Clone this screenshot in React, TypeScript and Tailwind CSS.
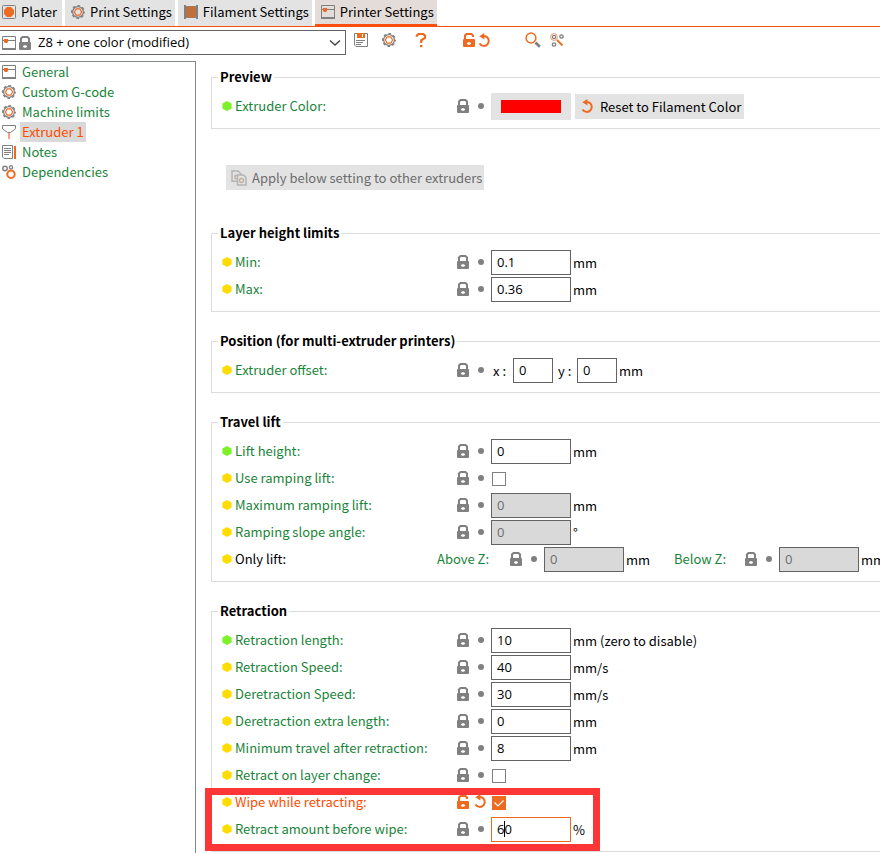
import type { ReactNode } from "react";

const ORANGE = "#ed6b21";
const GRAY = "#808080";

function PlaterIcon() {
  return (
    <svg width="14" height="14" viewBox="0 0 14 14" fill="none" aria-hidden="true">
      <rect x="0.5" y="0.5" width="13" height="13" rx="1" stroke={GRAY} />
      <path d="M5 2h4l3 3v4l-3 3H5L2 9V5z" fill={ORANGE} />
    </svg>
  );
}

function GearIcon() {
  return (
    <svg width="14" height="14" viewBox="0 0 14 14" fill="none" aria-hidden="true">
      <circle cx="7" cy="7" r="5.400" stroke={GRAY} strokeWidth="1.300" />
      <circle cx="7" cy="7" r="6.300" stroke={GRAY} strokeWidth="1.400" strokeDasharray="2.700 2.248" strokeDashoffset="1.350" />
      <path d="M5.200 3.800h3.600L10.600 7l-1.800 3.200H5.200L3.400 7z" stroke={ORANGE} strokeWidth="1.200" strokeLinejoin="round" />
    </svg>
  );
}

function SpoolIcon() {
  return (
    <svg width="14" height="14" viewBox="0 0 14 14" fill="none" aria-hidden="true">
      <rect x="2" y="1" width="10" height="12" fill="#c0703f" />
      <path d="M1 0v14M13 0v14" stroke={GRAY} strokeWidth="2" />
      <path d="M2 1.500h10M2 12.500h10" stroke="#a97c62" />
    </svg>
  );
}

function PrinterIcon() {
  return (
    <svg width="14" height="14" viewBox="0 0 14 14" fill="none" aria-hidden="true">
      <path d="M.5.5h13v13H.5z" stroke={GRAY} />
      <path d="M0 13h14" stroke={GRAY} strokeWidth="2" />
      <path d="M1 4.500h12" stroke={GRAY} />
      <path d="M2 3h4v3L5 7H3L2 6z" fill={ORANGE} />
    </svg>
  );
}

function LockIcon() {
  return (
    <svg width="12" height="14" viewBox="0 0 12 14" fill="none" aria-hidden="true">
      <path d="M2 7V2.500L3.500 1h5L10 2.500V7" stroke={GRAY} strokeWidth="2" />
      <rect y="6" width="12" height="8" rx="1" fill={GRAY} />
      <path d="M4 10.500h4M6 9v3" stroke="#fff" strokeWidth="1.300" />
    </svg>
  );
}

function UnlockIcon() {
  return (
    <svg width="12" height="14" viewBox="0 0 12 14" fill="none" aria-hidden="true">
      <path d="M2 7V2.500L3.500 1h5L10 2.500V4" stroke={ORANGE} strokeWidth="2" />
      <rect y="6" width="12" height="8" rx="1" fill={ORANGE} />
      <path d="M4 10.500h4M6 9v3" stroke="#fff" strokeWidth="1.300" />
    </svg>
  );
}

function UndoIcon() {
  return (
    <svg width="14" height="15" viewBox="0 0 14 15" fill="none" aria-hidden="true">
      <path d="M4.500 3.200h3A5 5 0 1 1 1.500 10.500" stroke={ORANGE} strokeWidth="2" />
      <path d="M6.400 0v6.400L1.300 3.200z" fill={ORANGE} />
    </svg>
  );
}

function SaveIcon() {
  return (
    <svg width="14" height="14" viewBox="0 0 14 14" fill="none" aria-hidden="true">
      <path d="M.5.5h13v13H2L.5 12z" stroke={GRAY} />
      <path d="M3 0h8v5H3z" fill={ORANGE} />
      <path d="M8.500 1v3" stroke="#fff" />
      <path d="M2 7.500h9M2 9.500h7M2 11.500h5" stroke={GRAY} />
    </svg>
  );
}

function HelpIcon() {
  return (
    <svg width="12" height="16" viewBox="0 0 12 16" fill="none" aria-hidden="true">
      <path d="M1.800 4.800V3.600L3.500 2h4.800l1.700 1.600v2.200L6.200 8.400V11" stroke={ORANGE} strokeWidth="2.200" />
      <path d="M5 13h2.400v2.200H5z" fill={ORANGE} />
    </svg>
  );
}

function SearchIcon() {
  return (
    <svg width="16" height="16" viewBox="0 0 16 16" fill="none" aria-hidden="true">
      <circle cx="6" cy="6" r="4.900" stroke={ORANGE} strokeWidth="1.500" />
      <path d="m10.500 10.500 4.300 4.300" stroke={GRAY} strokeWidth="2.800" />
    </svg>
  );
}

function CompareIcon() {
  return (
    <svg width="14" height="14" viewBox="0 0 14 14" fill="none" aria-hidden="true">
      <circle cx="4" cy="4" r="3.400" stroke="#e99a6e" />
      <circle cx="4" cy="4" r="1.600" stroke={GRAY} strokeWidth="1.200" />
      <circle cx="11.500" cy="3.500" r="1.700" stroke={GRAY} strokeWidth="1.300" />
      <circle cx="4" cy="11.500" r="1.700" stroke={GRAY} strokeWidth="1.300" />
      <path d="m7 7 5.500 5.500" stroke={ORANGE} strokeWidth="1.800" />
    </svg>
  );
}

function FunnelIcon() {
  return (
    <svg width="14" height="14" viewBox="0 0 14 14" fill="none" aria-hidden="true">
      <path d="M.5.5h13v3.300L8.500 7.500h-3L.5 3.800z" stroke={GRAY} />
      <path d="M7 8v6" stroke="#f3a67a" strokeWidth="2" />
    </svg>
  );
}

function NotesIcon() {
  return (
    <svg width="14" height="14" viewBox="0 0 14 14" fill="none" aria-hidden="true">
      <path d="M.5.5h10v13H2L.5 12z" stroke={GRAY} />
      <path d="M2 3.500h7M2 5.500h7M2 7.500h7M2 9.500h5" stroke={GRAY} />
      <path d="M13 1v13" stroke={ORANGE} strokeWidth="2" />
    </svg>
  );
}

function DependenciesIcon() {
  return (
    <svg width="14" height="14" viewBox="0 0 14 14" fill="none" aria-hidden="true">
      <circle cx="3" cy="3.500" r="2.200" stroke={GRAY} strokeWidth="1.500" />
      <circle cx="9" cy="2.300" r="1.600" stroke={GRAY} strokeWidth="1.300" />
      <circle cx="9" cy="9.300" r="3.700" stroke={ORANGE} strokeWidth="2" />
    </svg>
  );
}

function CopyIcon() {
  return (
    <svg width="16" height="16" viewBox="0 0 16 16" fill="none" aria-hidden="true">
      <path d="M6 11.200H1V1h6l3 3v1" stroke="#b4b4b4" strokeWidth="1.500" />
      <path d="M6.500 5h6L15 7.500V15H6.500z" stroke="#b4b4b4" strokeWidth="1.500" />
      <circle cx="10.500" cy="10.500" r="2" stroke="#c3aea3" strokeWidth="1.400" />
      <path d="M6 5.500H4v3h2" stroke="#c3aea3" strokeWidth="1.300" />
    </svg>
  );
}

function Hexagon({ level }: { level: "simple" | "advanced" }) {
  return (
    <svg className="shrink-0" width="10" height="10" viewBox="0 0 10 10" aria-hidden="true">
      <path d="M5 0l4.600 2.400v5.200L5 10 .4 7.600V2.400z" fill={level === "simple" ? "#7df028" : "#ffdc00"} />
    </svg>
  );
}

const tabs = [
  { label: "Plater", icon: <PlaterIcon /> },
  { label: "Print Settings", icon: <GearIcon /> },
  { label: "Filament Settings", icon: <SpoolIcon /> },
  { label: "Printer Settings", icon: <PrinterIcon />, active: true },
];

const pages = [
  { label: "General", icon: <PrinterIcon /> },
  { label: "Custom G-code", icon: <GearIcon /> },
  { label: "Machine limits", icon: <GearIcon /> },
  { label: "Extruder 1", icon: <FunnelIcon />, active: true },
  { label: "Notes", icon: <NotesIcon /> },
  { label: "Dependencies", icon: <DependenciesIcon /> },
];

function Marks({ modified = false }: { modified?: boolean }) {
  return (
    <div className="mr-[3px] flex shrink-0 items-center gap-1 pb-[2px]">
      <button type="button" aria-label="Reset to system value" className="flex w-[14px] justify-center">
        {modified ? <UnlockIcon /> : <LockIcon />}
      </button>
      <button type="button" aria-label="Reset to saved value" className="flex w-[14px] justify-center">
        {modified ? <UndoIcon /> : <span className="size-[6px] rounded-full bg-[#808080]" />}
      </button>
    </div>
  );
}

type RowProps = {
  label: string;
  id?: string;
  level?: "simple" | "advanced";
  modified?: boolean;
  children: ReactNode;
};

function Row({ label, id, level = "advanced", modified = false, children }: RowProps) {
  return (
    <div className="flex h-[27px] items-center">
      <div className="flex w-[234px] shrink-0 items-center gap-[3px] pb-[2px]">
        <Hexagon level={level} />
        <label htmlFor={id} className={modified ? "text-[#fc4d01]" : "text-[#1a8439]"}>
          {label}
        </label>
      </div>
      <Marks modified={modified} />
      {children}
    </div>
  );
}

type FieldProps = {
  id: string;
  value: string;
  unit?: string;
  disabled?: boolean;
  label?: string;
  small?: boolean;
  focused?: boolean;
};

function Field({ id, value, unit, disabled, label, small, focused }: FieldProps) {
  return (
    <>
      <div className="relative shrink-0">
        <input
          id={id}
          aria-label={label}
          defaultValue={value}
          disabled={disabled}
          className={`block h-[25px] border bg-white px-[5px] pb-px font-['Open_Sans',sans-serif] text-[13px] disabled:bg-[#d9d9d9] disabled:text-[#6d6d6d] ${
            small ? "w-10" : "w-20"
          } ${focused ? "border-[#ed6b21]" : "border-[#646464]"}`}
        />
        {focused && <span className="absolute top-1 left-[13px] h-4 w-px bg-black" />}
      </div>
      {unit && <span className="ml-[2px]">{unit}</span>}
    </>
  );
}

function Tick({ id, checked = false }: { id: string; checked?: boolean }) {
  return (
    <span className="relative ml-px flex">
      <input
        id={id}
        type="checkbox"
        defaultChecked={checked}
        className="peer size-[14px] appearance-none border border-[#808080] bg-white checked:border-[#ed6b21] checked:bg-[#ed6b21]"
      />
      <svg
        className="pointer-events-none absolute inset-0 hidden peer-checked:block"
        width="14"
        height="14"
        viewBox="0 0 14 14"
        fill="none"
        aria-hidden="true"
      >
        <path d="m2.500 6.500 3.500 3.500 5.500-5.500" stroke="#fff" strokeWidth="1.200" />
      </svg>
    </span>
  );
}

function Group({ title, children }: { title: string; children: ReactNode }) {
  return (
    <fieldset className="min-w-0 border border-r-0 border-[#dcdcdc] pt-[6px] pb-2 pl-[10px]">
      <legend className="-ml-1 px-[2px] leading-5 font-bold">{title}</legend>
      {children}
    </fieldset>
  );
}

export default function App() {
  return (
    <div className="flex min-h-screen flex-col overflow-hidden bg-white font-['Noto_Sans_CJK_SC',sans-serif] text-[13px] leading-5 whitespace-nowrap text-black">
      <nav className="flex h-[27px] gap-[3px] border-b border-[#fb4f0f]">
        {tabs.map((tab) => (
          <button
            key={tab.label}
            type="button"
            className={`flex items-center gap-[5px] pr-[3px] pb-[2px] pl-[6px] first:pr-[5px] first:pl-[2px] ${
              tab.active ? "border-b-2 border-[#fb4f0f] bg-[#e4dcd8] pt-[2px]" : "bg-[#e3e3e3]"
            }`}
          >
            {tab.icon}
            {tab.label}
          </button>
        ))}
      </nav>

      <header className="flex h-[34px] items-start pt-[3px]">
        <div className="relative">
          <select
            aria-label="Printer preset"
            className="block h-[25px] w-[346px] appearance-none border border-l-0 border-[#646464] bg-white pb-px pl-[38px] font-['Open_Sans',sans-serif] text-[13px]"
          >
            <option>Z8 + one color (modified)</option>
          </select>
          <span className="pointer-events-none absolute inset-y-0 left-[2px] flex items-center gap-[3px]">
            <PrinterIcon />
            <LockIcon />
          </span>
          <svg
            className="pointer-events-none absolute top-[9px] right-[5px]"
            width="12"
            height="8"
            viewBox="0 0 12 8"
            fill="none"
            aria-hidden="true"
          >
            <path d="m1 1.500 5 4.500 5-4.500" stroke="#444" strokeWidth="1.400" />
          </svg>
        </div>
        <div className="flex h-5 items-center pl-2">
          <button type="button" aria-label="Save preset">
            <SaveIcon />
          </button>
          <button type="button" aria-label="Edit physical printer" className="ml-[14px]">
            <GearIcon />
          </button>
          <button type="button" aria-label="Help" className="ml-[19px]">
            <HelpIcon />
          </button>
          <button type="button" aria-label="Reset to system preset" className="ml-9">
            <UnlockIcon />
          </button>
          <button type="button" aria-label="Undo changes" className="ml-[3px]">
            <UndoIcon />
          </button>
          <button type="button" aria-label="Search" className="ml-[33px]">
            <SearchIcon />
          </button>
          <button type="button" aria-label="Compare presets" className="ml-[9px]">
            <CompareIcon />
          </button>
        </div>
      </header>

      <div className="flex flex-1">
        <aside className="w-[196px] shrink-0 border-t border-r border-[#828790]">
          <ul>
            {pages.map((page) => (
              <li key={page.label}>
                <button type="button" className="flex h-5 items-center gap-1 pl-[2px]">
                  {page.icon}
                  <span className={page.active ? "bg-[#d9d9d9] px-[2px] text-[#fc4d01]" : "px-[2px] text-[#1a8439]"}>
                    {page.label}
                  </span>
                </button>
              </li>
            ))}
          </ul>
        </aside>

        <main className="min-w-0 flex-1 pt-[6px] pl-[15px]">
          <Group title="Preview">
            <Row label="Extruder Color:" id="color" level="simple">
              <input
                id="color"
                type="color"
                defaultValue="#ff0000"
                className="h-[27px] w-20 appearance-none bg-[#e3e3e3] px-[10px] py-[7px] [&::-webkit-color-swatch]:rounded-none [&::-webkit-color-swatch]:border-none [&::-webkit-color-swatch-wrapper]:p-0"
              />
              <button type="button" className="ml-1 flex h-[25px] items-center gap-[5px] bg-[#e3e3e3] pr-[3px] pl-[6px]">
                <UndoIcon />
                Reset to Filament Color
              </button>
            </Row>
          </Group>

          <button
            type="button"
            disabled
            className="mt-9 mb-[33px] ml-[15px] flex h-[25px] items-center gap-[5px] bg-[#e3e3e3] pr-[2px] pl-[5px] text-[#6d6d6d]"
          >
            <CopyIcon />
            Apply below setting to other extruders
          </button>

          <div className="flex flex-col gap-[19px]">
            <Group title="Layer height limits">
              <Row label="Min:" id="min">
                <Field id="min" value="0.1" unit="mm" />
              </Row>
              <Row label="Max:" id="max">
                <Field id="max" value="0.36" unit="mm" />
              </Row>
            </Group>

            <Group title="Position (for multi-extruder printers)">
              <Row label="Extruder offset:" id="offset-x">
                <span className="w-[22px] pl-[2px]">x :</span>
                <Field id="offset-x" value="0" small />
                <span className="w-6 pl-[5px]">y :</span>
                <Field id="offset-y" label="Extruder offset y" value="0" unit="mm" small />
              </Row>
            </Group>

            <Group title="Travel lift">
              <Row label="Lift height:" id="lift" level="simple">
                <Field id="lift" value="0" unit="mm" />
              </Row>
              <Row label="Use ramping lift:" id="ramping">
                <Tick id="ramping" />
              </Row>
              <Row label="Maximum ramping lift:" id="max-ramping">
                <Field id="max-ramping" value="0" unit="mm" disabled />
              </Row>
              <Row label="Ramping slope angle:" id="slope">
                <Field id="slope" value="0" unit="°" disabled />
              </Row>
              <div className="flex h-[27px] items-center">
                <div className="flex w-[215px] shrink-0 items-center gap-[3px] pb-[2px]">
                  <Hexagon level="advanced" />
                  <span>Only lift:</span>
                </div>
                <div className="flex w-[237px] shrink-0 items-center">
                  <label htmlFor="above" className="w-[72px] pb-[2px] text-[#1a8439]">
                    Above Z:
                  </label>
                  <Marks />
                  <Field id="above" value="0" unit="mm" disabled />
                </div>
                <div className="flex shrink-0 items-center">
                  <label htmlFor="below" className="w-[70px] pb-[2px] text-[#1a8439]">
                    Below Z:
                  </label>
                  <Marks />
                  <Field id="below" value="0" unit="mm" disabled />
                </div>
              </div>
            </Group>

            <Group title="Retraction">
              <Row label="Retraction length:" id="length" level="simple">
                <Field id="length" value="10" unit="mm (zero to disable)" />
              </Row>
              <Row label="Retraction Speed:" id="speed">
                <Field id="speed" value="40" unit="mm/s" />
              </Row>
              <Row label="Deretraction Speed:" id="despeed">
                <Field id="despeed" value="30" unit="mm/s" />
              </Row>
              <Row label="Deretraction extra length:" id="extra">
                <Field id="extra" value="0" unit="mm" />
              </Row>
              <Row label="Minimum travel after retraction:" id="travel">
                <Field id="travel" value="8" unit="mm" />
              </Row>
              <Row label="Retract on layer change:" id="layer-change">
                <Tick id="layer-change" />
              </Row>
              <div className="relative">
                <Row label="Wipe while retracting:" id="wipe" modified>
                  <Tick id="wipe" checked />
                </Row>
                <Row label="Retract amount before wipe:" id="before-wipe">
                  <Field id="before-wipe" value="60" unit="%" focused />
                </Row>
                <div className="pointer-events-none absolute -top-px -left-[17px] h-[63px] w-[395px] border-[7px] border-[#fc3636]" />
              </div>
            </Group>
          </div>
        </main>
      </div>
    </div>
  );
}
